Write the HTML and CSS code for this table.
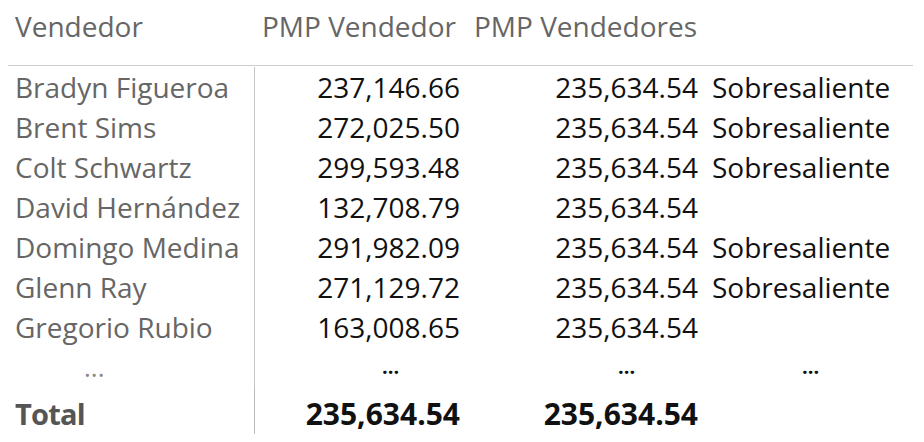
FILE: index.html
```html
<!DOCTYPE html>
<html lang="es">
<head>
<meta charset="utf-8">
<link rel="stylesheet" href="styles.css">
</head>
<body>
<div class="tbl">
  <div class="row head">
    <div class="c c1">Vendedor</div>
    <div class="c c2 hl">PMP Vendedor</div>
    <div class="c c3 hl">PMP Vendedores</div>
    <div class="c c4"></div>
  </div>
  <div class="body">
    <div class="row"><div class="c c1">Bradyn Figueroa</div><div class="c c2 num">237,146.66</div><div class="c c3 num">235,634.54</div><div class="c c4 txt">Sobresaliente</div></div>
    <div class="row"><div class="c c1">Brent Sims</div><div class="c c2 num">272,025.50</div><div class="c c3 num">235,634.54</div><div class="c c4 txt">Sobresaliente</div></div>
    <div class="row"><div class="c c1">Colt Schwartz</div><div class="c c2 num">299,593.48</div><div class="c c3 num">235,634.54</div><div class="c c4 txt">Sobresaliente</div></div>
    <div class="row"><div class="c c1">David Hernández</div><div class="c c2 num">132,708.79</div><div class="c c3 num">235,634.54</div><div class="c c4 txt"></div></div>
    <div class="row"><div class="c c1">Domingo Medina</div><div class="c c2 num">291,982.09</div><div class="c c3 num">235,634.54</div><div class="c c4 txt">Sobresaliente</div></div>
    <div class="row"><div class="c c1">Glenn Ray</div><div class="c c2 num">271,129.72</div><div class="c c3 num">235,634.54</div><div class="c c4 txt">Sobresaliente</div></div>
    <div class="row"><div class="c c1">Gregorio Rubio</div><div class="c c2 num">163,008.65</div><div class="c c3 num">235,634.54</div><div class="c c4 txt"></div></div>
    <div class="row dots"><div class="c c1 d1">...</div><div class="c c2 d2">...</div><div class="c c3 d3">...</div><div class="c c4 d4">...</div></div>
  </div>
  <div class="row total">
    <div class="c c1 tlabel">Total</div>
    <div class="c c2 num">235,634.54</div>
    <div class="c c3 num">235,634.54</div>
    <div class="c c4"></div>
  </div>
</div>
</body>
</html>
```
FILE: styles.css
```css
html, body {
  margin: 0;
  padding: 0;
  background: #ffffff;
}
body {
  font-family: "Open Sans", "Noto Sans", sans-serif;
  font-size: 28px;
  color: #666666;
}
.tbl {
  margin-left: 8px;
  width: 905px;
}
.row {
  display: grid;
  grid-template-columns: 247px 212px 238px 208px;
  height: 40px;
  align-items: center;
}
.head {
  height: 65px;
  border-bottom: 1px solid #d0cecc;
  align-items: start;
}
.head .c {
  padding-top: 8px;
  line-height: 36px;
}
.body {
  padding-top: 1px;
}
.c {
  white-space: nowrap;
  line-height: 40px;
}
.c1 {
  padding-left: 7px;
  border-right: 1px solid #c8c6c4;
  height: 100%;
}
.head .c1 { border-right: none; }
.hl {
  padding-left: 7px;
}
.num {
  text-align: right;
  padding-right: 7px;
  color: #111111;
}
.txt {
  padding-left: 7px;
  color: #111111;
}
.dots .c {
  font-size: 22px;
  line-height: 40px;
}
.d1 { padding-left: 76px; color: #8a8886; font-size: 26px !important; }
.d2 { padding-left: 127px; color: #111111; font-weight: 700; font-size: 20px !important; }
.d3 { padding-left: 151px; color: #111111; font-weight: 700; font-size: 20px !important; }
.d4 { padding-left: 97px; color: #111111; font-weight: 700; font-size: 20px !important; }
.total {
  height: 47px;
  font-weight: 700;
  font-size: 30px;
  align-items: stretch;
}
.total .c {
  padding-top: 7px;
  line-height: 40px;
}
.total .tlabel {
  color: #555555;
  border-right-color: #bdbbb9;
  font-size: 29px;
  letter-spacing: -0.8px;
}
```
